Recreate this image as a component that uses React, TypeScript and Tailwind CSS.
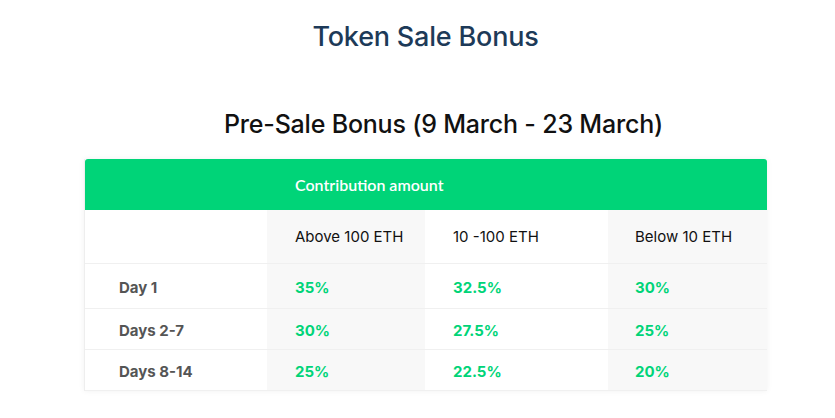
import React from "react";

const rows = [
  { day: "Day 1", v: ["35%", "32.5%", "30%"], h: "h-[45px]" },
  { day: "Days 2-7", v: ["30%", "27.5%", "25%"], h: "h-[41px]" },
  { day: "Days 8-14", v: ["25%", "22.5%", "20%"], h: "h-[41px]" },
];

export default function App() {
  return (
    <div className="w-[835px] h-[418px] bg-white overflow-hidden" style={{ fontFamily: "Inter, 'Noto Sans', sans-serif" }}>
      <div className="flex flex-col items-center">
        <h1 className="mt-[19px] ml-[16px] text-[27px] leading-[35px] font-medium text-[#1d3a58] tracking-[-0.2px]">Token Sale Bonus</h1>
        <h2 className="mt-[52px] ml-[52px] text-[25px] leading-[36px] font-medium text-[#111] tracking-[-0.2px]">
          Pre-Sale Bonus (9 March - 23 March)
        </h2>
      </div>
      <div className="ml-[84px] mt-[17px] w-[683px] shadow-[0_0_6px_rgba(0,0,0,0.06)] border-l border-[#eeeeee]">
        <div className="h-[51px] bg-[#00d478] rounded-t-[3px] flex items-center">
          <div className="w-[182px]" />
          <div className="pl-[28px] text-white text-[16px] font-semibold" style={{ fontFamily: "Lato, sans-serif" }}>
            Contribution amount
          </div>
        </div>
        <div className="grid grid-cols-[182px_158px_183px_159px] text-[15px] text-[#111]">
          <div className="h-[54px] border-b border-[#f0f0f0]" />
          <div className="h-[54px] border-b border-[#f0f0f0] bg-[#f8f8f8] flex items-center pl-[28px] pt-[2px]">Above 100 ETH</div>
          <div className="h-[54px] border-b border-[#f0f0f0] flex items-center pl-[28px] pt-[2px]">10 -100 ETH</div>
          <div className="h-[54px] border-b border-[#f0f0f0] bg-[#f8f8f8] flex items-center pl-[27px] pt-[2px]">Below 10 ETH</div>
          {rows.map((r) => (
            <React.Fragment key={r.day}>
              <div className={`${r.h} border-b border-[#f0f0f0] flex items-center pl-[34px] pt-[5px] font-bold text-[#555555]`}>{r.day}</div>
              <div className={`${r.h} border-b border-[#f0f0f0] bg-[#f8f8f8] flex items-center pl-[28px] pt-[5px] font-bold text-[#00d478]`}>{r.v[0]}</div>
              <div className={`${r.h} border-b border-[#f0f0f0] flex items-center pl-[28px] pt-[5px] font-bold text-[#00d478]`}>{r.v[1]}</div>
              <div className={`${r.h} border-b border-[#f0f0f0] bg-[#f8f8f8] flex items-center pl-[27px] pt-[5px] font-bold text-[#00d478]`}>{r.v[2]}</div>
            </React.Fragment>
          ))}
        </div>
      </div>
    </div>
  );
}
